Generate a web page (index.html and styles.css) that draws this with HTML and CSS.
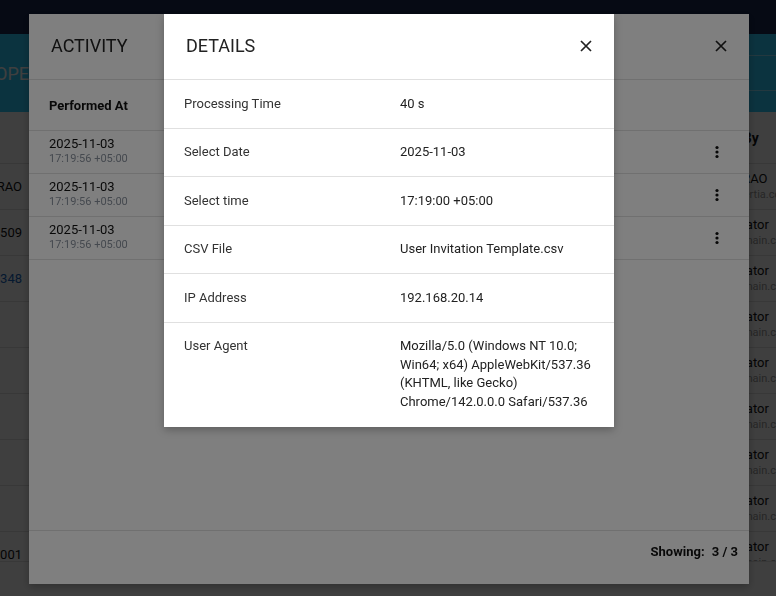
FILE: index.html
```html
<!DOCTYPE html>
<html lang="en">
<head>
    <meta charset="UTF-8">
    <meta name="viewport" content="width=device-width, initial-scale=1.0">
    <title>Operations</title>
    <link rel="stylesheet" href="styles.css">
</head>
<body>
    <div class="page">
        <div class="topbar"></div>
        <div class="banner">
            <h1 class="banner-title">OPERATIONS</h1>
            <div class="banner-search"></div>
        </div>
        <div class="records">
            <div class="record record-head">
                <span class="col-a"></span><span></span><span class="col-c">Created By</span>
            </div>
            <div class="record">
                <span class="col-a">NAVEED RAO</span><span></span>
                <span class="col-c"><span class="who">NAVEED RAO</span><span class="mail">naveed@inertia.com</span></span>
            </div>
            <div class="record">
                <span class="col-a">0300-1234509</span><span></span>
                <span class="col-c"><span class="who">Administrator</span><span class="mail">admin@domain.com</span></span>
            </div>
            <div class="record">
                <span class="col-a link">12348</span><span></span>
                <span class="col-c"><span class="who">Administrator</span><span class="mail">admin@domain.com</span></span>
            </div>
            <div class="record">
                <span class="col-a"></span><span></span>
                <span class="col-c"><span class="who">Administrator</span><span class="mail">admin@domain.com</span></span>
            </div>
            <div class="record">
                <span class="col-a"></span><span></span>
                <span class="col-c"><span class="who">Administrator</span><span class="mail">admin@domain.com</span></span>
            </div>
            <div class="record">
                <span class="col-a"></span><span></span>
                <span class="col-c"><span class="who">Administrator</span><span class="mail">admin@domain.com</span></span>
            </div>
            <div class="record">
                <span class="col-a"></span><span></span>
                <span class="col-c"><span class="who">Administrator</span><span class="mail">admin@domain.com</span></span>
            </div>
            <div class="record">
                <span class="col-a"></span><span></span>
                <span class="col-c"><span class="who">Administrator</span><span class="mail">admin@domain.com</span></span>
            </div>
            <div class="record">
                <span class="col-a">Invite 001</span><span></span>
                <span class="col-c"><span class="who">Administrator</span><span class="mail">admin@domain.com</span></span>
            </div>
        </div>
    </div>

    <!-- activity log dialog -->
    <div class="overlay">
        <div class="modal modal-activity">
            <div class="modal-header">
                <h2>Activity</h2>
                <button class="icon-btn" aria-label="Close">
                    <svg width="12" height="12" viewBox="0 0 12 12"><path d="M1 1L11 11M11 1L1 11" stroke="#222" stroke-width="1.7" fill="none"/></svg>
                </button>
            </div>
            <div class="activity-table">
                <div class="activity-head">Performed At</div>
                <div class="activity-row">
                    <div class="stamp">
                        <div class="stamp-date">2025-11-03</div>
                        <div class="stamp-time">17:19:56 +05:00</div>
                    </div>
                    <button class="kebab" aria-label="More">
                        <svg width="4" height="14" viewBox="0 0 4 14"><circle cx="2" cy="2.5" r="1.6"/><circle cx="2" cy="7" r="1.6"/><circle cx="2" cy="11.5" r="1.6"/></svg>
                    </button>
                </div>
                <div class="activity-row">
                    <div class="stamp">
                        <div class="stamp-date">2025-11-03</div>
                        <div class="stamp-time">17:19:56 +05:00</div>
                    </div>
                    <button class="kebab" aria-label="More">
                        <svg width="4" height="14" viewBox="0 0 4 14"><circle cx="2" cy="2.5" r="1.6"/><circle cx="2" cy="7" r="1.6"/><circle cx="2" cy="11.5" r="1.6"/></svg>
                    </button>
                </div>
                <div class="activity-row">
                    <div class="stamp">
                        <div class="stamp-date">2025-11-03</div>
                        <div class="stamp-time">17:19:56 +05:00</div>
                    </div>
                    <button class="kebab" aria-label="More">
                        <svg width="4" height="14" viewBox="0 0 4 14"><circle cx="2" cy="2.5" r="1.6"/><circle cx="2" cy="7" r="1.6"/><circle cx="2" cy="11.5" r="1.6"/></svg>
                    </button>
                </div>
            </div>
            <div class="modal-footer">Showing: <span class="count">3 / 3</span></div>
        </div>
    </div>

    <!-- details of one activity entry -->
    <div class="overlay">
        <div class="modal modal-details">
            <div class="modal-header">
                <h2>Details</h2>
                <button class="icon-btn" aria-label="Close">
                    <svg width="12" height="12" viewBox="0 0 12 12"><path d="M1 1L11 11M11 1L1 11" stroke="#222" stroke-width="1.7" fill="none"/></svg>
                </button>
            </div>
            <div class="detail-row"><span class="detail-label">Processing Time</span><span class="detail-value">40 s</span></div>
            <div class="detail-row"><span class="detail-label">Select Date</span><span class="detail-value">2025-11-03</span></div>
            <div class="detail-row"><span class="detail-label">Select time</span><span class="detail-value">17:19:00 +05:00</span></div>
            <div class="detail-row"><span class="detail-label">CSV File</span><span class="detail-value">User Invitation Template.csv</span></div>
            <div class="detail-row"><span class="detail-label">IP Address</span><span class="detail-value">192.168.20.14</span></div>
            <div class="detail-row"><span class="detail-label">User Agent</span><span class="detail-value">Mozilla/5.0 (Windows NT 10.0; Win64; x64) AppleWebKit/537.36 (KHTML, like Gecko) Chrome/142.0.0.0 Safari/537.36</span></div>
        </div>
    </div>
</body>
</html>
```

FILE: styles.css
```css
* {
    box-sizing: border-box;
}
body {
    margin: 0;
    height: 596px;
    overflow: hidden;
    font-family: Roboto, "Liberation Sans", sans-serif;
    color: #222;
    background: #fff;
}

/* page behind the dialogs */
.topbar {
    height: 34px;
    background: #182850;
}
.banner {
    height: 78px;
    background: #2fcdfc;
    display: flex;
    align-items: center;
    justify-content: space-between;
}
.banner-title {
    margin: 0;
    font-size: 18px;
    font-weight: 400;
    text-indent: -5px;
    color: #fff;
}
.banner-search {
    width: 240px;
    height: 36px;
    border-top: 1px solid rgba(255, 255, 255, 0.45);
    border-bottom: 1px solid rgba(255, 255, 255, 0.45);
}
.records {
    height: 450px;
    overflow: hidden;
    border-bottom: 1px solid #e0e0e0;
}
.record {
    display: grid;
    grid-template-columns: 22px 1fr 86px;
    height: 46px;
    align-items: center;
    border-bottom: 1px solid #e0e0e0;
    font-size: 13px;
    white-space: nowrap;
}
.record-head {
    height: 52px;
    font-size: 14px;
    font-weight: 700;
    color: #111;
}
.col-a {
    display: flex;
    justify-content: flex-end;
    color: #111;
}
.col-a.link {
    color: #1565c0;
}
.col-c {
    display: flex;
    flex-direction: column;
    overflow: hidden;
}
.who {
    line-height: 16px;
    color: #111;
}
.mail {
    font-size: 11px;
    line-height: 16px;
    color: #999;
}

/* dialogs */
.overlay {
    position: fixed;
    inset: 0;
    background: rgba(0, 0, 0, 0.5);
    display: flex;
    justify-content: center;
    align-items: flex-start;
    padding: 14px 0 0 2px;
}
.modal {
    background: #fff;
    box-shadow: 0 3px 8px rgba(0, 0, 0, 0.25);
}
.modal-header {
    height: 66px;
    display: flex;
    align-items: center;
    justify-content: space-between;
    padding: 0 16px 2px 22px;
    border-bottom: 1px solid #e0e0e0;
}
.modal-header h2 {
    margin: 0;
    font-size: 18px;
    font-weight: 400;
    text-transform: uppercase;
    color: #222;
}
.icon-btn {
    width: 24px;
    height: 24px;
    padding: 0;
    border: none;
    background: none;
    display: flex;
    align-items: center;
    justify-content: center;
    cursor: pointer;
}

.modal-activity {
    width: 720px;
    height: 570px;
    display: flex;
    flex-direction: column;
}
.activity-table {
    flex: 1;
}
.activity-head {
    height: 51px;
    display: flex;
    align-items: center;
    padding: 0 20px;
    font-size: 13px;
    font-weight: 700;
    color: #111;
    border-bottom: 1px solid #e0e0e0;
}
.activity-row {
    height: 43px;
    display: flex;
    align-items: center;
    justify-content: space-between;
    padding: 0 20px;
    border-bottom: 1px solid #e0e0e0;
}
.stamp {
    padding-bottom: 3px;
}
.stamp-date {
    font-size: 13px;
    line-height: 16px;
    color: #111;
}
.stamp-time {
    font-size: 11px;
    line-height: 14px;
    color: #8a929e;
}
.kebab {
    width: 24px;
    height: 24px;
    padding: 0;
    border: none;
    background: none;
    display: flex;
    align-items: center;
    justify-content: center;
    fill: #111;
    cursor: pointer;
}
.modal-footer {
    height: 54px;
    padding: 12px 11px 0;
    border-top: 1px solid #e0e0e0;
    text-align: right;
    font-size: 13px;
    line-height: 18px;
    font-weight: 700;
    color: #111;
}
.count {
    margin-left: 4px;
}

.modal-details {
    width: 450px;
}
.detail-row {
    display: grid;
    grid-template-columns: 216px 1fr;
    padding: 14.5px 20px;
    font-size: 13px;
    line-height: 18.5px;
    border-bottom: 1px solid #e0e0e0;
}
.detail-row:last-child {
    border-bottom: none;
    padding-bottom: 16px;
}
.detail-label {
    color: #333;
}
.detail-value {
    color: #222;
}
```
